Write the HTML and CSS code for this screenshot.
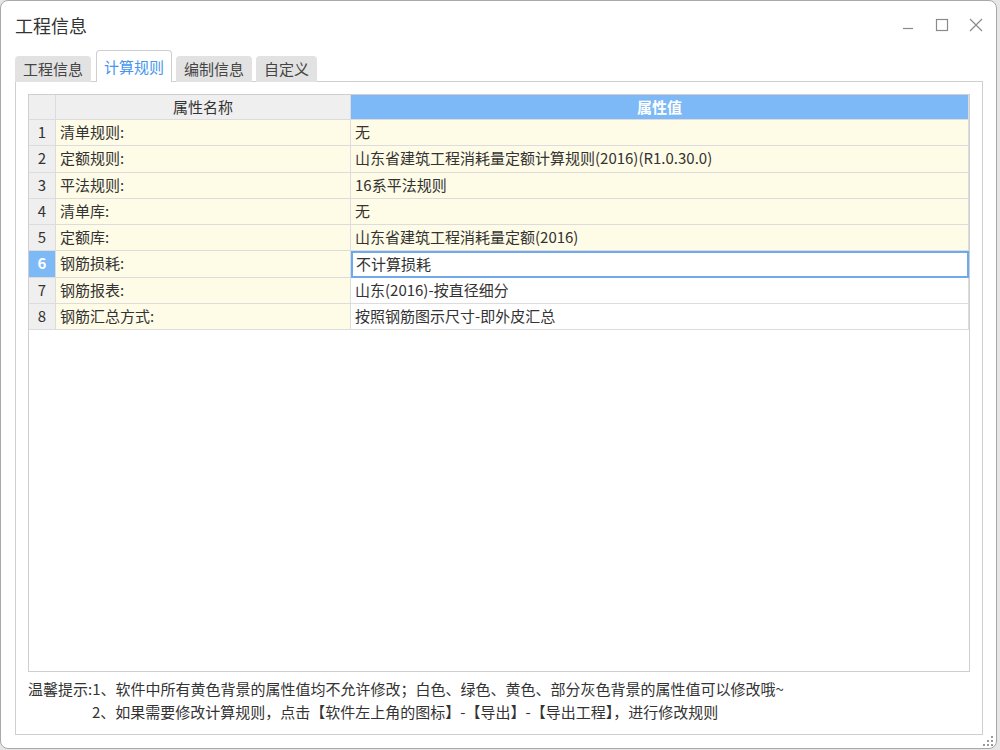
FILE: index.html
```html
<!DOCTYPE html>
<html lang="zh-CN">
<head>
<meta charset="utf-8">
<title>工程信息</title>
<link rel="stylesheet" href="styles.css">
</head>
<body>
<div class="window">
  <div class="titlebar">
    <div class="title">工程信息</div>
    <div class="controls">
      <svg class="ctl" width="14" height="14" viewBox="0 0 14 14"><line x1="2" y1="10.5" x2="12" y2="10.5" stroke="#8a8a8a" stroke-width="1.2"/></svg>
      <svg class="ctl" width="14" height="14" viewBox="0 0 14 14"><rect x="1.5" y="1.5" width="11" height="11" fill="none" stroke="#8a8a8a" stroke-width="1.2"/></svg>
      <svg class="ctl" width="14" height="14" viewBox="0 0 14 14"><path d="M1 1 L13 13 M13 1 L1 13" stroke="#8a8a8a" stroke-width="1.2" fill="none"/></svg>
    </div>
  </div>
  <div class="tabs">
    <div class="tab">工程信息</div>
    <div class="tab active">计算规则</div>
    <div class="tab">编制信息</div>
    <div class="tab">自定义</div>
  </div>
  <div class="panel">
    <div class="gridbox">
      <div class="row head">
        <div class="cell num"></div>
        <div class="cell name">属性名称</div>
        <div class="cell value">属性值</div>
      </div>
      <div class="row ro"><div class="cell num">1</div><div class="cell name">清单规则:</div><div class="cell value">无</div></div>
      <div class="row ro"><div class="cell num">2</div><div class="cell name">定额规则:</div><div class="cell value">山东省建筑工程消耗量定额计算规则(2016)(R1.0.30.0)</div></div>
      <div class="row ro"><div class="cell num">3</div><div class="cell name">平法规则:</div><div class="cell value">16系平法规则</div></div>
      <div class="row ro"><div class="cell num">4</div><div class="cell name">清单库:</div><div class="cell value">无</div></div>
      <div class="row ro"><div class="cell num">5</div><div class="cell name">定额库:</div><div class="cell value">山东省建筑工程消耗量定额(2016)</div></div>
      <div class="row sel"><div class="cell num">6</div><div class="cell name">钢筋损耗:</div><div class="cell value">不计算损耗</div></div>
      <div class="row"><div class="cell num">7</div><div class="cell name">钢筋报表:</div><div class="cell value">山东(2016)-按直径细分</div></div>
      <div class="row"><div class="cell num">8</div><div class="cell name">钢筋汇总方式:</div><div class="cell value">按照钢筋图示尺寸-即外皮汇总</div></div>
    </div>
    <div class="tips">
      <div class="tip">温馨提示:1、软件中所有黄色背景的属性值均不允许修改；白色、绿色、黄色、部分灰色背景的属性值可以修改哦~</div>
      <div class="tip indent">2、如果需要修改计算规则，点击【软件左上角的图标】-【导出】-【导出工程】，进行修改规则</div>
    </div>
  </div>
  <svg class="grip" width="12" height="12" viewBox="0 0 12 12">
    <rect x="9" y="9" width="2" height="2" fill="#999"/>
    <rect x="5" y="9" width="2" height="2" fill="#999"/>
    <rect x="1" y="9" width="2" height="2" fill="#999"/>
    <rect x="9" y="5" width="2" height="2" fill="#999"/>
    <rect x="5" y="5" width="2" height="2" fill="#999"/>
    <rect x="9" y="1" width="2" height="2" fill="#999"/>
  </svg>
</div>
</body>
</html>
```

FILE: styles.css
```css
* { box-sizing: border-box; }
html, body { margin: 0; padding: 0; }
body {
  width: 1000px;
  height: 750px;
  background: #e6e6e6;
  font-family: "Noto Sans CJK SC", "Noto Sans", sans-serif;
  color: #333;
  overflow: hidden;
}
.window {
  position: relative;
  width: 997px;
  height: 749px;
  background: #fff;
  border: 1px solid #a8a8a8;
  border-radius: 8px;
  display: flex;
  flex-direction: column;
  padding: 0 13px 13px 14px;
}
.titlebar {
  height: 50px;
  display: flex;
  align-items: center;
  justify-content: space-between;
  padding-bottom: 2px;
}
.title {
  font-size: 18px;
  line-height: 24px;
  color: #333;
}
.controls {
  display: flex;
  align-items: center;
  gap: 20px;
  margin-right: 0;
}
.ctl { display: block; }
.tabs {
  display: flex;
  align-items: flex-end;
  height: 31px;
  gap: 4px;
  margin-bottom: -1px;
  position: relative;
  z-index: 1;
}
.tab {
  height: 26px;
  padding: 0 8px;
  font-size: 15px;
  line-height: 26px;
  color: #444;
  background: #e2e2e2;
  border-radius: 4px 4px 0 0;
}
.tab.active {
  height: 32px;
  line-height: 31px;
  padding: 0 7px;
  margin-left: 1px;
  background: #fff;
  color: #4596ee;
  border: 1px solid #cfcfcf;
  border-bottom: none;
}
.panel {
  flex: 1;
  border: 1px solid #cfcfcf;
  padding: 12px 12px 0 12px;
  display: flex;
  flex-direction: column;
}
.gridbox {
  height: 578px;
  border: 1px solid #cfcfcf;
}
.row {
  display: grid;
  grid-template-columns: 27px 295px 1fr;
  height: 26.3px;
  font-size: 15px;
}
.row.head { height: 25px; }
.cell {
  border-right: 1px solid #dcdcdc;
  border-bottom: 1px solid #dcdcdc;
  line-height: 24px;
  white-space: nowrap;
  overflow: hidden;
}
.row.head .cell { line-height: 23px; }
.cell.num {
  background: #efefef;
  text-align: center;
  color: #333;
}
.cell.name {
  background: #fefbe6;
  padding-left: 4px;
}
.cell.value {
  background: #fff;
  padding-left: 4px;
}
.row.ro .cell.value { background: #fefbe6; }
.row.head .cell.name {
  background: #efefef;
  text-align: center;
  padding-left: 0;
}
.row.head .cell.value {
  background: #7db9f6;
  color: #fff;
  font-weight: bold;
  text-align: center;
  padding-left: 0;
}
.row.sel .cell.num {
  background: #7db9f6;
  color: #fff;
  font-weight: bold;
}
.row.sel .cell.value {
  border: 2px solid #6ea9ec;
  line-height: 22px;
  padding-left: 3px;
}
.tips {
  padding-top: 5px;
  font-size: 15px;
  line-height: 23px;
  color: #333;
}
.tip { white-space: nowrap; }
.tip.indent { padding-left: 64px; }
.grip {
  position: absolute;
  right: 2px;
  bottom: 1px;
}
```
